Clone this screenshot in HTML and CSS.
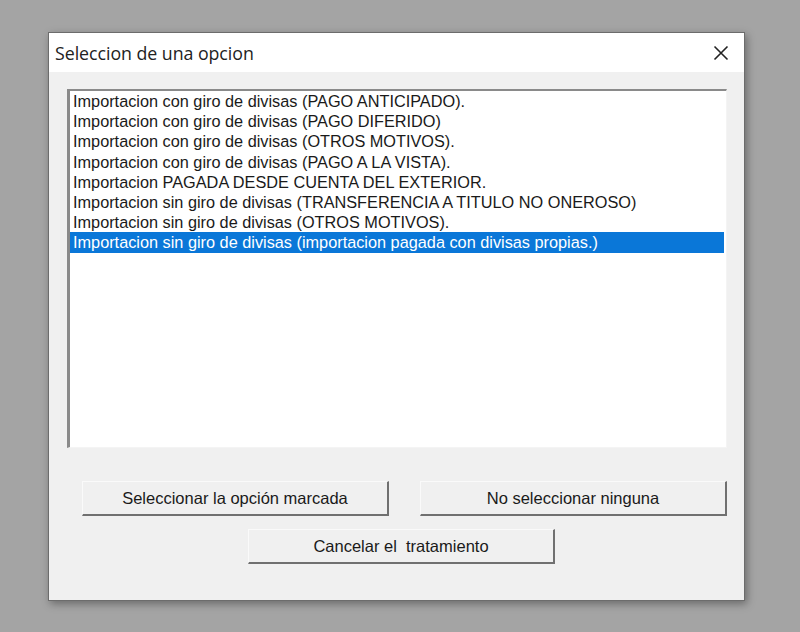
FILE: index.html
```html
<!DOCTYPE html>
<html lang="es">
<head>
<meta charset="utf-8">
<title>Seleccion de una opcion</title>
<link rel="stylesheet" href="styles.css">
</head>
<body>
<div class="dialog">
  <div class="titlebar">
    <span class="title">Seleccion de una opcion</span>
    <svg class="close" width="16" height="16" viewBox="0 0 16 16"><path d="M1.5 1.5 L14.5 14.5 M14.5 1.5 L1.5 14.5" stroke="#222" stroke-width="1.6" fill="none"/></svg>
  </div>
  <div class="body">
    <div class="listbox">
      <div class="item">Importacion con giro de divisas (PAGO ANTICIPADO).</div>
      <div class="item">Importacion con giro de divisas (PAGO DIFERIDO)</div>
      <div class="item">Importacion con giro de divisas (OTROS MOTIVOS).</div>
      <div class="item">Importacion con giro de divisas (PAGO A LA VISTA).</div>
      <div class="item">Importacion PAGADA DESDE CUENTA DEL EXTERIOR.</div>
      <div class="item">Importacion sin giro de divisas (TRANSFERENCIA A TITULO NO ONEROSO)</div>
      <div class="item">Importacion sin giro de divisas (OTROS MOTIVOS).</div>
      <div class="item selected">Importacion sin giro de divisas (importacion pagada con divisas propias.)</div>
    </div>
    <div class="row row-top">
      <button class="btn">Seleccionar la opción marcada</button>
      <button class="btn">No seleccionar ninguna</button>
    </div>
    <div class="row row-bottom">
      <button class="btn">Cancelar el&nbsp; tratamiento</button>
    </div>
  </div>
</div>
</body>
</html>
```
FILE: styles.css
```css
html, body {
  margin: 0;
  padding: 0;
  height: 100%;
}
body {
  background: #a4a4a4;
  font-family: "Liberation Sans", Arial, sans-serif;
  overflow: hidden;
}
.dialog {
  box-sizing: border-box;
  margin: 32px 0 0 48px;
  width: 697px;
  height: 569px;
  border: 1px solid #6c6c6c;
  background: #f0f0f0;
  display: flex;
  flex-direction: column;
  box-shadow: 2px 3px 8px rgba(0, 0, 0, 0.35);
}
.titlebar {
  height: 39px;
  background: #ffffff;
  display: flex;
  align-items: center;
  justify-content: space-between;
  padding: 0 15px 0 6px;
}
.title {
  font-family: "Open Sans", "Noto Sans", sans-serif;
  font-size: 17.8px;
  color: #222;
  letter-spacing: -0.05px;
}
.close {
  display: block;
}
.body {
  flex: 1;
  display: flex;
  flex-direction: column;
  padding: 17px 0 0 18px;
}
.listbox {
  box-sizing: border-box;
  width: 660px;
  height: 359px;
  background: #fff;
  border-top: 2px solid #8a8a8a;
  border-left: 3px solid #8a8a8a;
  border-right: 1px solid #f4f4f4;
  border-bottom: 1px solid #f4f4f4;
  padding-top: 0;
}
.item {
  height: 20.2px;
  line-height: 20px;
  font-size: 16.3px;
  color: #1a1a1a;
  padding-left: 3px;
  margin-right: 2px;
  white-space: nowrap;
}
.item.selected {
  background: #0a77d8;
  color: #fff;
}
.row {
  display: flex;
}
.row-top {
  margin-top: 33px;
  margin-left: 15px;
  gap: 31px;
}
.row-bottom {
  margin-top: 13px;
  margin-left: 181px;
}
.btn {
  box-sizing: border-box;
  width: 307px;
  height: 35px;
  padding: 0;
  background: #f0f0f0;
  border-top: 1px solid #fafafa;
  border-left: 1px solid #fafafa;
  border-right: 2px solid #707070;
  border-bottom: 2px solid #707070;
  font-family: "Liberation Sans", Arial, sans-serif;
  font-size: 16.5px;
  color: #1a1a1a;
  text-align: center;
}
```
